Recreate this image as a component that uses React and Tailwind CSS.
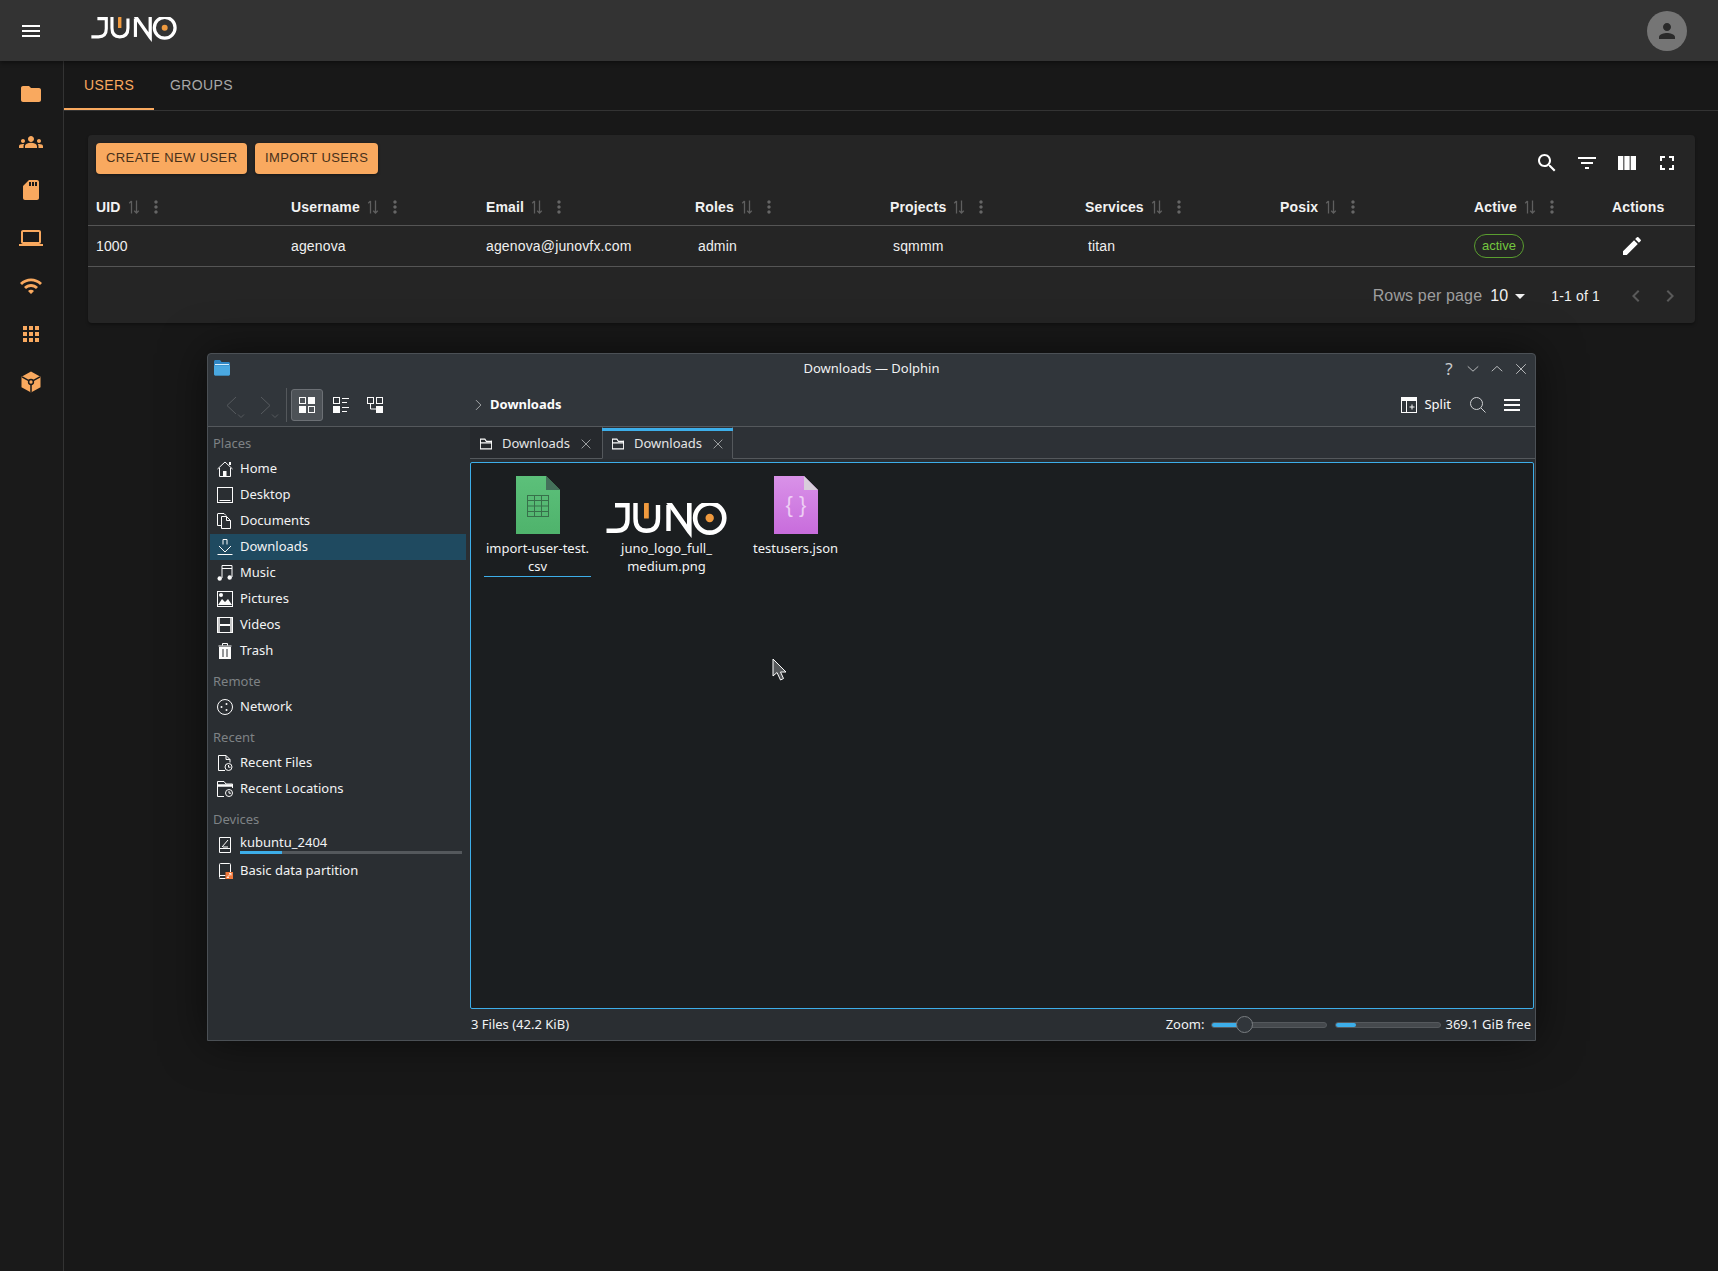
const mui = {
  menu: 'M3 18h18v-2H3v2zm0-5h18v-2H3v2zm0-7v2h18V6H3z',
  folder: 'M10 4H4c-1.1 0-1.99.9-1.99 2L2 18c0 1.1.9 2 2 2h16c1.1 0 2-.9 2-2V8c0-1.1-.9-2-2-2h-8l-2-2z',
  groups: 'M12 12.75c1.63 0 3.07.39 4.24.9 1.08.48 1.76 1.56 1.76 2.73V18H6v-1.61c0-1.18.68-2.26 1.76-2.73 1.17-.52 2.61-.91 4.24-.91zM4 13c1.1 0 2-.9 2-2s-.9-2-2-2-2 .9-2 2 .9 2 2 2zm1.13 1.1c-.37-.06-.74-.1-1.13-.1-.99 0-1.93.21-2.78.58C.48 14.9 0 15.62 0 16.43V18h4.5v-1.61c0-.83.23-1.61.63-2.29zM20 13c1.1 0 2-.9 2-2s-.9-2-2-2-2 .9-2 2 .9 2 2 2zm4 3.43c0-.81-.48-1.53-1.22-1.85-.85-.37-1.79-.58-2.78-.58-.39 0-.76.04-1.13.1.4.68.63 1.46.63 2.29V18H24v-1.57zM12 6c1.66 0 3 1.34 3 3s-1.34 3-3 3-3-1.34-3-3 1.34-3 3-3z',
  sd: 'M18 2h-8L4.02 8 4 20c0 1.1.9 2 2 2h12c1.1 0 2-.9 2-2V4c0-1.1-.9-2-2-2zm-6 6h-2V4h2v4zm3 0h-2V4h2v4zm3 0h-2V4h2v4z',
  laptop: 'M20 18c1.1 0 1.99-.9 1.99-2L22 6c0-1.1-.9-2-2-2H4c-1.1 0-2 .9-2 2v10c0 1.1.9 2 2 2H0v2h24v-2h-4zM4 6h16v10H4V6z',
  wifi: 'M1 9l2 2c4.97-4.97 13.03-4.97 18 0l2-2C16.93 2.93 7.08 2.93 1 9zm8 8l3 3 3-3c-1.65-1.66-4.34-1.66-6 0zm-4-4l2 2c2.76-2.76 7.24-2.76 10 0l2-2C15.14 9.14 8.87 9.14 5 13z',
  apps: 'M4 8h4V4H4v4zm6 12h4v-4h-4v4zm-6 0h4v-4H4v4zm0-6h4v-4H4v4zm6 0h4v-4h-4v4zm6-10v4h4V4h-4zm-6 4h4V4h-4v4zm6 6h4v-4h-4v4zm0 6h4v-4h-4v4z',
  search: 'M15.5 14h-.79l-.28-.27C15.41 12.59 16 11.11 16 9.5 16 5.91 13.09 3 9.5 3S3 5.91 3 9.5 5.91 16 9.5 16c1.61 0 3.09-.59 4.23-1.57l.27.28v.79l5 4.99L20.49 19l-4.99-5zm-6 0C7.01 14 5 11.99 5 9.5S7.01 5 9.5 5 14 7.01 14 9.5 11.99 14 9.5 14z',
  filter: 'M10 18h4v-2h-4v2zM3 6v2h18V6H3zm3 7h12v-2H6v2z',
  columns: 'M14.67 5v14H9.33V5h5.34zm1 14H21V5h-5.33v14zm-7.34 0V5H3v14h5.33z',
  fullscreen: 'M7 14H5v5h5v-2H7v-3zm-2-4h2V7h3V5H5v5zm12 7h-3v2h5v-5h-2v3zM14 5v2h3v3h2V5h-5z',
  more: 'M12 8c1.1 0 2-.9 2-2s-.9-2-2-2-2 .9-2 2 .9 2 2 2zm0 2c-1.1 0-2 .9-2 2s.9 2 2 2 2-.9 2-2-.9-2-2-2zm0 6c-1.1 0-2 .9-2 2s.9 2 2 2 2-.9 2-2-.9-2-2-2z',
  edit: 'M3 17.25V21h3.75L17.81 9.94l-3.75-3.75L3 17.25zM20.71 7.04c.39-.39.39-1.02 0-1.41l-2.34-2.34a.9959.9959 0 0 0-1.41 0l-1.83 1.83 3.75 3.75 1.83-1.83z',
  person: 'M12 12c2.21 0 4-1.79 4-4s-1.79-4-4-4-4 1.79-4 4 1.79 4 4 4zm0 2c-2.67 0-8 1.34-8 4v2h16v-2c0-2.66-5.33-4-8-4z',
  left: 'M15.41 7.41 14 6l-6 6 6 6 1.41-1.41L10.83 12z',
  right: 'M10 6 8.59 7.41 13.17 12l-4.58 4.59L10 18l6-6z',
  drop: 'm7 10 5 5 5-5z',
};

const MuiIcon = ({ name, className }) => (
  <svg viewBox="0 0 24 24" fill="currentColor" className={className}>
    <path d={mui[name]} />
  </svg>
);

// 16px breeze-style line icons
const Breeze = ({ children, className = 'w-4 h-4 text-[#fcfcfc]' }) => (
  <svg viewBox="0 0 16 16" fill="none" stroke="currentColor" strokeWidth="1" className={className}>
    {children}
  </svg>
);

const placeIcons = {
  home: <><path d="M0.5 8 L8 1 L15.5 8" /><path d="M2.5 7v8.5h11V7" /><rect x="6" y="10" width="3.5" height="5.5" fill="currentColor" stroke="none" /><rect x="12" y="1" width="2" height="3" fill="currentColor" stroke="none" /></>,
  desktop: <><rect x="0.5" y="0.5" width="15" height="15" /><path d="M2.5 13.5h11" /></>,
  documents: <><path d="M0.5 1V12.5H4" /><path d="M0.5 .5H7l2 2" /><path d="M4.5 3.5h5l4 4v8h-9z" /><path d="M9.5 3.5v4h4" /></>,
  downloads: <><path d="M6 .5h4v5" /><path d="M6 .5v5" /><path d="M2 7l6 6 6-6" /><path d="M.5 15.5h15" /></>,
  music: <><path d="M5 13V.5h10V12" /><path d="M5 3.5h10" /><circle cx="2.7" cy="13.5" r="2.2" fill="currentColor" stroke="none" /><circle cx="12.7" cy="12.5" r="2.2" fill="currentColor" stroke="none" /></>,
  pictures: <><rect x="0.5" y="0.5" width="15" height="15" /><circle cx="4" cy="4" r="2" fill="currentColor" stroke="none" /><path d="M1 14l4-6 3 3 3-3 4 6z" fill="currentColor" stroke="none" /></>,
  videos: <><rect x="0.5" y="0.5" width="15" height="15" /><rect x="0" y="0" width="3" height="16" fill="currentColor" stroke="none" opacity=".75" /><rect x="13" y="0" width="3" height="16" fill="currentColor" stroke="none" opacity=".75" /><path d="M3 8h10" strokeWidth="2" /></>,
  trash: <><path d="M1.5 3h13M5.5 2.5V.5h5v2" /><path d="M2 4h12v12H2z" fill="currentColor" stroke="none" /><path d="M6 6v8M10 6v8" stroke="#2a2e32" /></>,
  network: <><circle cx="8" cy="8" r="7.5" /><circle cx="4.5" cy="8" r="1" fill="currentColor" stroke="none" /><circle cx="9.5" cy="5" r="1" fill="currentColor" stroke="none" /><circle cx="9.5" cy="11" r="1" fill="currentColor" stroke="none" /></>,
  recentFiles: <><path d="M8 15.5H1.5V.5H9l4 4v3" /><path d="M9 .5v4h4" /><circle cx="11.5" cy="12" r="3.5" /><path d="M11.5 10v2.2h2" /></>,
  recentLocations: <><path d="M7 15.5H.5V.5H7l2 2.5h6.5v4" /><path d="M.5 4.5h15" strokeWidth="2.5" /><circle cx="12" cy="12" r="3.5" /><path d="M12 10v2.2h2" /></>,
  drive: <><path d="M2.5 .5h11v15h-11z" /><path d="M2.5 11.5h11" /><path d="M5 10L11 3M6 10h5" /></>,
  partition: <><path d="M2.5 14.5v-13a1 1 0 0 1 1-1h9a1 1 0 0 1 1 1v8" /><path d="M2.5 12.5h6M2.5 15.5h6" /><rect x="8.5" y="9" width="7.5" height="7" fill="#f0793c" stroke="none" /><path d="M10 14.5l4-4M12 10.5h2v2M10 14.5h2" stroke="#fff" strokeWidth=".8" /></>,
};

const TabFolder = () => (
  <Breeze className="w-3 h-3 text-[#fcfcfc] shrink-0">
    <path d="M.5 3.5V14.5h15V3.5" strokeWidth="1.4" />
    <path d="M.5 1.5h6l2 3h7v2H.5z" strokeWidth="1.4" />
  </Breeze>
);

const JunoLogo = ({ className }) => (
  <svg viewBox="0 0 121 35" className={className}>
    <g fill="none" stroke="#fff" strokeWidth="4.4">
      <path d="M9 2.2H21.5V16.5Q21.5 27.8 10.5 27.8H0.5" />
      <path d="M29.5 0V15.5Q29.5 27.8 40.5 27.8Q52 27.8 52 15.5V2" />
      <path d="M62.5 28V2" />
      <circle cx="103.7" cy="15" r="14.6" strokeWidth="4.6" />
    </g>
    <polygon points="60.3,0 66,0 81,21.5 81,0 85.6,0 85.6,35 81.5,30" fill="#fff" />
    <rect x="38" y="0" width="4.8" height="15.5" rx="0.5" fill="#f09a3e" />
    <circle cx="103.7" cy="15" r="4.2" fill="#f09a3e" />
  </svg>
);

const FileIcon = ({ id, from, to, fold, children }) => (
  <svg viewBox="0 0 44 58" className="w-11 h-[58px]">
    <defs>
      <linearGradient id={id} x1="0" y1="0" x2="0" y2="1">
        <stop offset="0" stopColor={from} />
        <stop offset="1" stopColor={to} />
      </linearGradient>
    </defs>
    <path d="M0 0H30L44 14V58H0z" fill={`url(#${id})`} />
    <path d="M30 0L44 14H30z" fill={fold} />
    {children}
  </svg>
);

const columns = [
  { label: 'UID', value: '1000' },
  { label: 'Username', value: 'agenova' },
  { label: 'Email', value: 'agenova@junovfx.com' },
  { label: 'Roles', value: 'admin', inset: true },
  { label: 'Projects', value: 'sqmmm', inset: true },
  { label: 'Services', value: 'titan', inset: true },
  { label: 'Posix', value: '' },
];

const HeaderCell = ({ label }) => (
  <div className="flex items-center pl-2 pb-[2px] h-full text-sm font-bold tracking-[0.15px] text-[#f2f2f2]">
    <span>{label}</span>
    <svg viewBox="0 0 12 14" fill="none" stroke="#5f5f5f" strokeWidth="1.3" className="w-3 h-[14px] ml-[7px]">
      <path d="M3.5 13.5V1M1.2 3.2L3.5 1M8.5 .5V13M6.2 10.8L8.5 13L10.8 10.8" />
    </svg>
    <MuiIcon name="more" className="w-5 h-5 ml-[6px] text-[#666]" />
  </div>
);

const sections = [
  {
    title: 'Places',
    items: [
      ['home', 'Home'],
      ['desktop', 'Desktop'],
      ['documents', 'Documents'],
      ['downloads', 'Downloads', true],
      ['music', 'Music'],
      ['pictures', 'Pictures'],
      ['videos', 'Videos'],
      ['trash', 'Trash'],
    ],
  },
  { title: 'Remote', items: [['network', 'Network']] },
  {
    title: 'Recent',
    items: [
      ['recentFiles', 'Recent Files'],
      ['recentLocations', 'Recent Locations'],
    ],
  },
];

const PlaceRow = ({ icon, label, active }) => (
  <div className={`flex items-center h-[26px] ml-[2px] mr-[4px] pl-[7px] gap-[7px] ${active ? 'bg-[#1f4a60]' : ''}`}>
    <Breeze>{placeIcons[icon]}</Breeze>
    <span className="text-[13px] text-[#f2f3f4]">{label}</span>
  </div>
);

const ToolbarAndTitle = () => (
  <>
    <div className="relative flex items-center justify-end h-[29px] pr-[7px] gap-[10px] text-[#c8cacc]">
      <svg viewBox="0 0 16 16" className="absolute left-[5px] top-[6px] w-[18px] h-4">
        <path d="M0 1.5C0 .7.7 0 1.5 0H6l1.5 2h7c.8 0 1.5.7 1.5 1.5V14c0 .8-.7 1.5-1.5 1.5h-13C.7 15.5 0 14.8 0 14z" fill="#2f86c4" />
        <path d="M0 5.5h16V14c0 .8-.7 1.5-1.5 1.5h-13C.7 15.5 0 14.8 0 14z" fill="#4aa8e0" />
        <path d="M1 4h14v1H1z" fill="#d6eefc" />
      </svg>
      <span className="absolute inset-x-0 text-center text-[13px] text-[#f0f1f2]">Downloads — Dolphin</span>
      <span className="relative w-[14px] text-center text-[17px] leading-none">?</span>
      <Breeze className="relative w-[14px] h-[14px]"><path d="M2 5l6 5.5L14 5" /></Breeze>
      <Breeze className="relative w-[14px] h-[14px]"><path d="M2 10.5L8 5l6 5.5" /></Breeze>
      <Breeze className="relative w-[14px] h-[14px]"><path d="M2.5 2.5l11 11M13.5 2.5l-11 11" /></Breeze>
    </div>
    <div className="flex items-center h-[44px] border-b border-[#54585c] text-[#fcfcfc]">
      <svg viewBox="0 0 78 34" fill="none" stroke="#565a5e" strokeWidth="1" className="w-[78px] h-[34px] shrink-0">
        <path d="M28 9L19 17.5L28 26M53 9L62 17.5L53 26" />
        <path d="M30 26.5l3 3 3-3M64 26.5l3 3 3-3" />
      </svg>
      <div className="w-px h-[34px] bg-[#54585c]" />
      <div className="flex items-center justify-center w-8 h-8 ml-1 bg-[#4d5257] border border-[#6c7075] rounded-[3px]">
        <Breeze>
          <rect x=".5" y=".5" width="6" height="6" /><rect x="9" y="0" width="7" height="7" fill="currentColor" stroke="none" />
          <rect x="0" y="9" width="7" height="7" fill="currentColor" stroke="none" /><rect x="9.5" y="9.5" width="6" height="6" />
        </Breeze>
      </div>
      <div className="ml-[10px]">
        <Breeze>
          <rect x=".5" y=".5" width="6" height="6" /><path d="M9 1.5h7M9 5.5h5" />
          <rect x="0" y="9" width="7" height="7" fill="currentColor" stroke="none" /><path d="M9 10.5h7M9 14.5h5" />
        </Breeze>
      </div>
      <div className="ml-[18px]">
        <Breeze>
          <rect x=".5" y=".5" width="6" height="6" /><rect x="9.5" y=".5" width="6" height="6" />
          <path d="M3.5 7v5H9" /><rect x="9" y="9" width="7" height="7" fill="currentColor" stroke="none" />
        </Breeze>
      </div>
      <Breeze className="w-3 h-3 ml-[90px] text-[#c8cacc]"><path d="M4 1.5L10.5 8 4 14.5" /></Breeze>
      <span className="ml-[5px] text-[13px] font-bold">Downloads</span>
      <div className="flex items-center ml-auto pr-[15px]">
        <Breeze>
          <rect x=".5" y=".5" width="15" height="15" /><rect x="0" y="0" width="16" height="4" fill="currentColor" stroke="none" />
          <path d="M5.5 4v12M8.5 10h5M11 7.5v5" />
        </Breeze>
        <span className="ml-[7px] text-[13px]">Split</span>
        <Breeze className="w-4 h-4 ml-[19px] text-[#d0d2d4]"><circle cx="6.5" cy="6.5" r="6" /><path d="M11 11l4.5 4.5" /></Breeze>
        <svg viewBox="0 0 16 16" fill="currentColor" className="w-4 h-4 ml-[18px]">
          <rect y="2" width="16" height="2" /><rect y="7" width="16" height="2" /><rect y="12" width="16" height="2" />
        </svg>
      </div>
    </div>
  </>
);

const Sidebar = () => (
  <div className="w-[262px] shrink-0 pt-[3px]">
    {sections.map((s) => (
      <div key={s.title} className="mb-[4px]">
        <div className="h-[26px] pl-[5px] leading-[26px] text-[13px] text-[#7e8285]">{s.title}</div>
        {s.items.map(([icon, label, active]) => (
          <PlaceRow key={label} icon={icon} label={label} active={active} />
        ))}
      </div>
    ))}
    <div className="h-[26px] pl-[5px] leading-[26px] text-[13px] text-[#7e8285]">Devices</div>
    <div className="relative flex items-center h-[26px] ml-[2px] mr-[4px] pl-[7px] gap-[7px]">
      <Breeze>{placeIcons.drive}</Breeze>
      <span className="text-[13px] text-[#f2f3f4] -translate-y-[2px]">kubuntu_2404</span>
      <div className="absolute left-[30px] right-[4px] bottom-[4px] h-[3px] bg-[#54585c]">
        <div className="w-[42px] h-full bg-[#3daee9]" />
      </div>
    </div>
    <div className="flex items-center h-[26px] ml-[2px] mr-[4px] pl-[7px] gap-[7px]">
      <Breeze>{placeIcons.partition}</Breeze>
      <span className="text-[13px] text-[#f2f3f4]">Basic data partition</span>
    </div>
  </div>
);

const FileItem = ({ icon, lines, underline }) => (
  <div className="flex flex-col items-center w-[129px]">
    <div className="flex items-end justify-center h-[58px]">{icon}</div>
    <div className="relative pt-[5px] text-center text-[13px] leading-[18px] text-[#f2f3f4]">
      {lines.map((l) => (
        <div key={l}>{l}</div>
      ))}
    </div>
    {underline && <div className="w-[107px] h-px mt-[1px] bg-[#3daee9]" />}
  </div>
);

const Dolphin = () => (
  <div className="flex flex-col w-[1329px] h-[688px] ml-[143px] mt-[30px] bg-[#31363b] border border-[#4b5055] rounded-t-[4px] shadow-[0_0_45px_rgba(0,0,0,0.55)] font-['Noto_Sans',sans-serif]">
    <ToolbarAndTitle />
    <div className="flex flex-1 min-h-0 bg-[#2a2e32]">
      <Sidebar />
      <div className="flex flex-col flex-1 min-w-0">
        <div className="flex h-[32px] border-b border-[#54585c] -mb-px bg-[#2d3136]">
          <div className="flex items-center w-[132px] h-[31px] pl-[10px] pt-[2px] bg-[#26292d] text-[13px] text-[#e4e5e6]">
            <TabFolder />
            <span className="ml-[10px]">Downloads</span>
            <Breeze className="w-[10px] h-[10px] ml-[11px] text-[#9a9d9f]"><path d="M1 1l14 14M15 1L1 15" strokeWidth="1.6" /></Breeze>
          </div>
          <div className="relative flex items-center w-[131px] h-[32px] pl-[9px] pt-[2px] border-x border-b border-x-[#54585c] border-b-[#2d3136] bg-[#2d3136] text-[13px] text-[#e4e5e6]">
            <div className="absolute -left-px -right-px top-px h-[3px] bg-[#3daee9]" />
            <TabFolder />
            <span className="ml-[10px]">Downloads</span>
            <Breeze className="w-[10px] h-[10px] ml-[11px] text-[#9a9d9f]"><path d="M1 1l14 14M15 1L1 15" strokeWidth="1.6" /></Breeze>
          </div>
        </div>
        <div className="flex-1 min-h-0 mt-1 mr-px border border-[#3daee9] rounded-[2px] bg-[#1b1e20] pl-[2px] pt-[13px]">
          <div className="flex">
            <FileItem
              underline
              lines={['import-user-test.', 'csv']}
              icon={
                <FileIcon id="csv" from="#5cc07a" to="#4fb36c" fold="#44705a">
                  <g fill="none" stroke="#37704a" strokeWidth="1">
                    <rect x="11.5" y="19.5" width="21" height="21" />
                    <path d="M11.5 24.5h21M11.5 30h21M11.5 35.5h21M18.5 19.5v21M25.5 19.5v21" />
                  </g>
                </FileIcon>
              }
            />
            <FileItem lines={['juno_logo_full_', 'medium.png']} icon={<JunoLogo className="w-[121px] h-[35px] mb-[-4px]" />} />
            <FileItem
              lines={['testusers.json']}
              icon={
                <FileIcon id="json" from="#d992e8" to="#c86cdc" fold="#d8cddb">
                  <text x="22" y="36" textAnchor="middle" fontSize="22" fontFamily="Liberation Sans, sans-serif" fill="#f3dcf8" opacity=".85">{'{ }'}</text>
                </FileIcon>
              }
            />
          </div>
        </div>
        <div className="flex items-center h-[31px] pr-[4px] text-[13px] text-[#f2f3f4]">
          <span className="ml-px">3 Files (42.2 KiB)</span>
          <span className="ml-auto">Zoom:</span>
          <div className="relative w-[116px] h-[6px] ml-[7px] rounded-full bg-[#45494d] border border-[#55595d]">
            <div className="w-[33px] h-full rounded-full bg-[#3daee9]" />
            <div className="absolute left-[24px] -top-[7px] w-[17px] h-[17px] rounded-full bg-[#31363b] border border-[#7a7e82]" />
          </div>
          <div className="w-[106px] h-[6px] ml-2 rounded-full bg-[#45494d] border border-[#55595d]">
            <div className="w-[20px] h-full rounded-full bg-[#3daee9]" />
          </div>
          <span className="ml-[4px]">369.1 GiB free</span>
        </div>
      </div>
    </div>
  </div>
);

const App = () => {
  const nav = ['folder', 'groups', 'sd', 'laptop', 'wifi', 'apps'];
  return (
    <div className="relative w-[1718px] h-[1271px] overflow-hidden flex flex-col bg-[#181818] font-['Liberation_Sans',Arial,sans-serif]">
      <header className="flex items-center h-[61px] shrink-0 bg-[#333333] shadow-[0_2px_4px_rgba(0,0,0,0.4)] z-10">
        <MuiIcon name="menu" className="w-6 h-6 ml-[19px] text-white" />
        <JunoLogo className="w-[86px] h-[25px] ml-[48px] -mt-[2px]" />
        <div className="flex items-center justify-center w-10 h-10 ml-auto mr-[31px] rounded-full bg-[#757575]">
          <MuiIcon name="person" className="w-6 h-6 text-[#2a2a2a]" />
        </div>
      </header>
      <div className="flex flex-1 min-h-0">
        <aside className="w-[64px] shrink-0 pt-[9px] border-r border-[#333333] bg-[#1a1a1a] text-[#f9a95f]">
          <div className="w-[62px]">
            {nav.map((n) => (
              <div key={n} className="flex items-center justify-center h-12">
                <MuiIcon name={n} className="w-6 h-6" />
              </div>
            ))}
            <div className="flex items-center justify-center h-12">
              <svg viewBox="0 0 24 24" className="w-6 h-6">
                <path d="M12 1.5l9.5 5.2v10.6L12 22.5l-9.5-5.2V6.7z" fill="currentColor" />
                <g fill="none" stroke="#1a1a1a" strokeWidth="1.5">
                  <circle cx="12" cy="12" r="2.4" />
                  <path d="M12 14.5V22.5M9.8 10.7L3 6.8M14.2 10.7L21 6.8" />
                </g>
              </svg>
            </div>
          </div>
        </aside>
        <main className="flex-1 min-w-0">
          <div className="flex h-[50px] border-b border-[#333333] text-sm tracking-[0.4px]">
            <div className="flex items-center h-[49px] w-[90px] pl-5 text-[#f9a95f] border-b-2 border-[#f9a95f]">USERS</div>
            <div className="flex items-center h-[47px] pl-4 text-[#a8a8a8]">GROUPS</div>
          </div>
          <section className="w-[1607px] h-[188px] ml-6 mt-6 rounded bg-[#252525] shadow-[0_2px_3px_rgba(0,0,0,0.3)]">
            <div className="flex items-start h-[55px] pt-2 pl-2 pr-2">
              <button className="h-[31px] px-[10px] pb-[2px] rounded bg-[#f9a95f] text-[13px] tracking-[0.4px] text-[#47301a] shadow-[0_1px_3px_rgba(0,0,0,0.4)]">CREATE NEW USER</button>
              <button className="h-[31px] px-[9.5px] pb-[2px] ml-2 rounded bg-[#f9a95f] text-[13px] tracking-[0.4px] text-[#47301a] shadow-[0_1px_3px_rgba(0,0,0,0.4)]">IMPORT USERS</button>
              <div className="flex ml-auto text-white">
                {['search', 'filter', 'columns', 'fullscreen'].map((n) => (
                  <div key={n} className="flex items-center justify-center w-10 h-10">
                    <MuiIcon name={n} className="w-6 h-6" />
                  </div>
                ))}
              </div>
            </div>
            <div className="grid grid-cols-[195px_195px_209px_195px_195px_195px_194px_138px_91px] h-[36px] border-b border-[#555555]">
              {columns.map((c) => (
                <HeaderCell key={c.label} label={c.label} />
              ))}
              <HeaderCell label="Active" />
              <div className="flex items-center pl-2 pb-[2px] text-sm font-bold tracking-[0.15px] text-[#f2f2f2]">Actions</div>
            </div>
            <div className="grid grid-cols-[195px_195px_209px_195px_195px_195px_194px_138px_91px] h-[41px] border-b border-[#555555] text-sm tracking-[0.15px] text-[#f0f0f0]">
              {columns.map((c) => (
                <div key={c.label} className={`flex items-center ${c.inset ? 'pl-[11px]' : 'pl-2'}`}>{c.value}</div>
              ))}
              <div className="flex items-center pl-2">
                <span className="flex items-center h-6 px-[7px] rounded-full border border-[#5a9e2f] text-[13px] tracking-normal text-[#74c83f]">active</span>
              </div>
              <div className="flex items-center pl-[16px]">
                <MuiIcon name="edit" className="w-6 h-6 text-white" />
              </div>
            </div>
            <div className="flex items-center justify-end h-[56px] pt-[1px] pr-[13px] tracking-[0.15px]">
              <span className="text-base text-[#9e9e9e]">Rows per page</span>
              <span className="ml-2 text-base text-[#f0f0f0]">10</span>
              <MuiIcon name="drop" className="w-6 h-6 text-[#f0f0f0]" />
              <span className="ml-[19px] text-sm text-[#f0f0f0]">1-1 of 1</span>
              <MuiIcon name="left" className="w-6 h-6 ml-[24px] text-[#5a5a5a]" />
              <MuiIcon name="right" className="w-6 h-6 ml-[10px] text-[#5a5a5a]" />
            </div>
          </section>
          <Dolphin />
        </main>
      </div>
      <svg viewBox="0 0 16 23" className="absolute left-[772px] top-[658px] w-[16px] h-[23px]">
        <path d="M1 1V18L5 14.5L8.5 22L11.5 20.5L8.5 14H14z" fill="#55585a" stroke="#fcfcfc" strokeWidth="1" />
      </svg>
    </div>
  );
};

export default App;
